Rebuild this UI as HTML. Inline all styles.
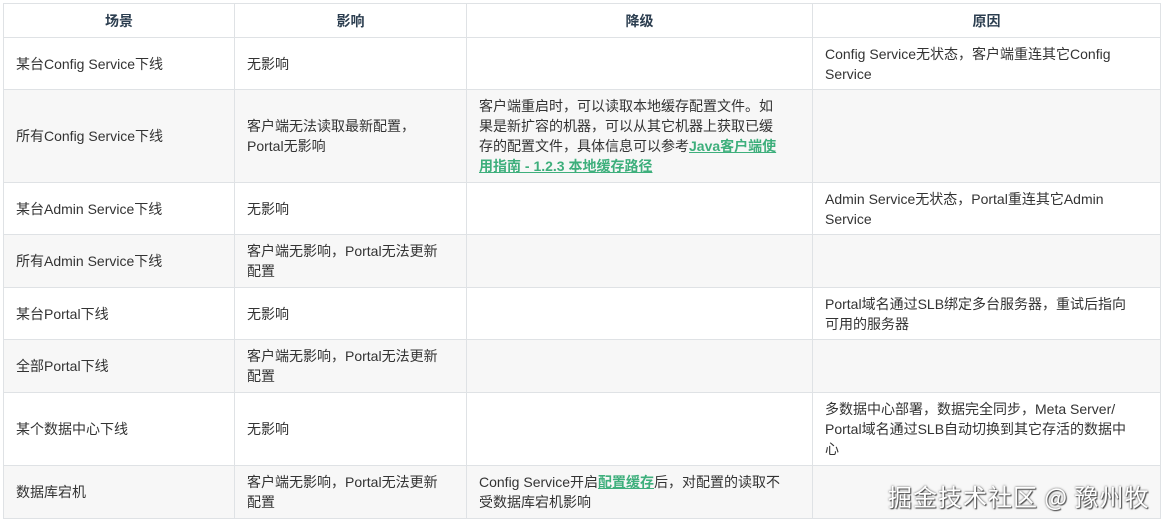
<!DOCTYPE html>
<html><head><meta charset="utf-8"><style>
body{margin:0;background:#fff;width:1164px;height:521px;overflow:hidden;font-family:"Liberation Sans","Noto Sans CJK SC",sans-serif;}
table{position:absolute;left:3px;top:3px;border-collapse:collapse;font-size:14px;color:#333;table-layout:fixed;}
td,th{border:1px solid #dfe2e5;padding:0 12px;line-height:20px;vertical-align:middle;text-align:left;white-space:nowrap;overflow:hidden}
th{text-align:center;font-weight:bold;height:33px;color:#2c3e50}
tr:nth-child(2n+1) td{background:#f7f7f7}
a{color:#3eaf7c;font-weight:bold;text-decoration:underline}
.wm{position:absolute;left:888px;top:478px;font-size:24px;color:#fff;text-shadow:0 0 2px #555,1px 1px 1px #444;font-family:"Noto Sans CJK SC",sans-serif;letter-spacing:1px}
</style></head><body>
<table>
<colgroup><col style="width:231px"><col style="width:232px"><col style="width:346px"><col style="width:348px"></colgroup>
<tr><th>场景</th><th>影响</th><th>降级</th><th>原因</th></tr>
<tr style="height:52px"><td>某台Config Service下线</td><td>无影响</td><td></td><td>Config Service无状态，客户端重连其它Config<br>Service</td></tr>
<tr style="height:93px"><td>所有Config Service下线</td><td>客户端无法读取最新配置，<br>Portal无影响</td><td>客户端重启时，可以读取本地缓存配置文件。如<br>果是新扩容的机器，可以从其它机器上获取已缓<br>存的配置文件，具体信息可以参考<a>Java客户端使<br>用指南 - 1.2.3 本地缓存路径</a></td><td></td></tr>
<tr style="height:52px"><td>某台Admin Service下线</td><td>无影响</td><td></td><td>Admin Service无状态，Portal重连其它Admin<br>Service</td></tr>
<tr style="height:53px"><td>所有Admin Service下线</td><td>客户端无影响，Portal无法更新<br>配置</td><td></td><td></td></tr>
<tr style="height:52px"><td>某台Portal下线</td><td>无影响</td><td></td><td>Portal域名通过SLB绑定多台服务器，重试后指向<br>可用的服务器</td></tr>
<tr style="height:53px"><td>全部Portal下线</td><td>客户端无影响，Portal无法更新<br>配置</td><td></td><td></td></tr>
<tr style="height:73px"><td>某个数据中心下线</td><td>无影响</td><td></td><td>多数据中心部署，数据完全同步，Meta Server/<br>Portal域名通过SLB自动切换到其它存活的数据中<br>心</td></tr>
<tr style="height:53px"><td>数据库宕机</td><td>客户端无影响，Portal无法更新<br>配置</td><td>Config Service开启<a>配置缓存</a>后，对配置的读取不<br>受数据库宕机影响</td><td></td></tr>
</table>
<div class="wm">掘金技术社区 @ 豫州牧</div>
</body></html>
